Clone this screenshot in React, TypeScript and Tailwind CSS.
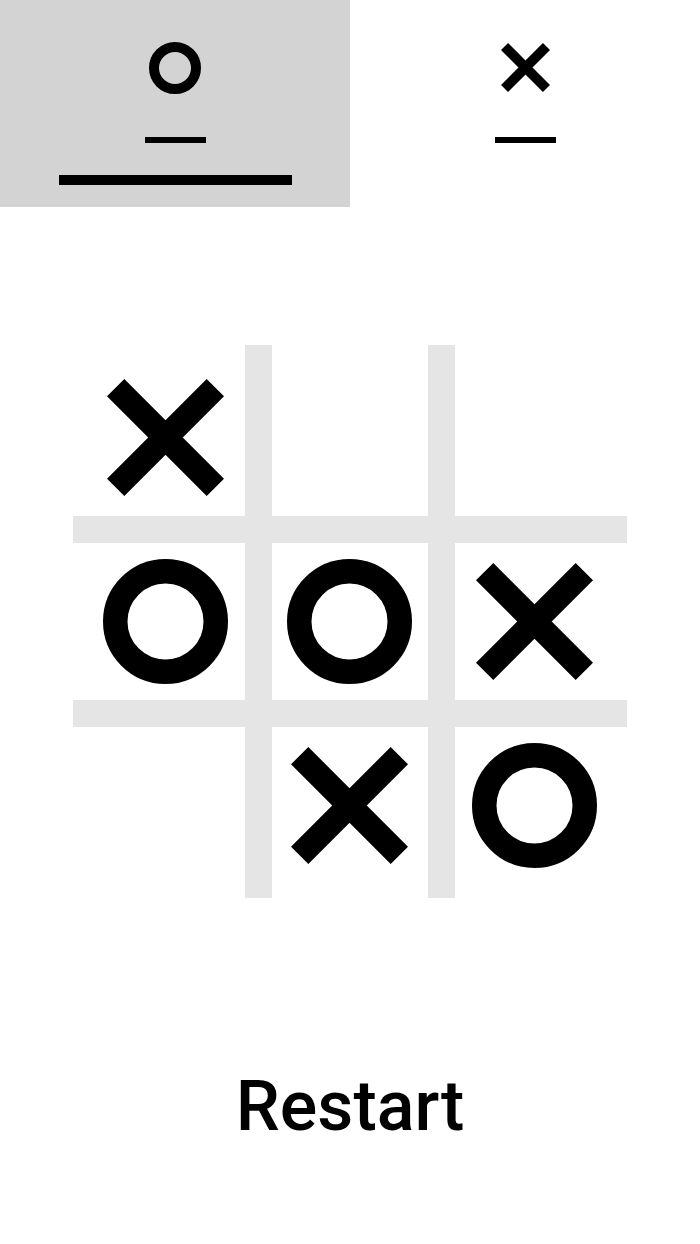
import { useState } from 'react'

type Mark = 'X' | 'O' | null

const START: Mark[] = ['X', null, null, 'O', 'O', 'X', null, 'X', 'O']

// borders draw the grid lines; the matching padding keeps each mark centred in its full third
const CELL_CLASSES = [
  'border-r-[13px] border-b-[13px] pl-[13px] pt-[13px]',
  'border-x-[14px] border-b-[13px] pt-[13px]',
  'border-l-[13px] border-b-[13px] pr-[13px] pt-[13px]',
  'border-r-[13px] border-y-[14px] pl-[13px]',
  'border-x-[14px] border-y-[14px]',
  'border-l-[13px] border-y-[14px] pr-[13px]',
  'border-r-[13px] border-t-[13px] pl-[13px] pb-[13px]',
  'border-x-[14px] border-t-[13px] pb-[13px]',
  'border-l-[13px] border-t-[13px] pr-[13px] pb-[13px]',
]

function Cross({ size, stroke }: { size: number; stroke: number }) {
  const a = stroke / (2 * Math.SQRT2)
  return (
    <svg width={size} height={size} viewBox={`0 0 ${size} ${size}`} className="block">
      <path
        d={`M${a} ${a}L${size - a} ${size - a}M${size - a} ${a}L${a} ${size - a}`}
        stroke="#000"
        strokeWidth={stroke}
        fill="none"
      />
    </svg>
  )
}

function Nought({ size, stroke }: { size: number; stroke: number }) {
  return (
    <svg width={size} height={size} viewBox={`0 0 ${size} ${size}`} className="block">
      <circle cx={size / 2} cy={size / 2} r={(size - stroke) / 2} stroke="#000" strokeWidth={stroke} fill="none" />
    </svg>
  )
}

function PlayerTab({ player, active }: { player: 'X' | 'O'; active: boolean }) {
  return (
    <div className={`flex h-[207px] w-1/2 flex-col items-center ${active ? 'bg-[#d3d3d3]' : 'bg-white'}`}>
      {player === 'O' ? (
        <div className="mt-[42px]">
          <Nought size={52} stroke={10} />
        </div>
      ) : (
        <div className="mt-[43px]">
          <Cross size={49} stroke={10} />
        </div>
      )}
      <div className={`h-[6px] w-[61px] bg-black ${player === 'O' ? 'mt-[43px]' : 'mt-[45px]'}`} />
      {active && <div className="mt-[32px] h-[10px] w-[233px] bg-black" />}
    </div>
  )
}

export default function App() {
  const [board, setBoard] = useState<Mark[]>(START)
  const [turn, setTurn] = useState<'X' | 'O'>('O')

  function play(i: number) {
    if (board[i]) return
    const next = [...board]
    next[i] = turn
    setBoard(next)
    setTurn(turn === 'X' ? 'O' : 'X')
  }

  function restart() {
    setBoard(Array(9).fill(null))
    setTurn('X')
  }

  return (
    <div className="min-h-[1244px] w-full bg-white font-['Roboto',sans-serif]">
      <div className="flex">
        <PlayerTab player="O" active={turn === 'O'} />
        <PlayerTab player="X" active={turn === 'X'} />
      </div>

      <div className="mx-auto mt-[138px] grid h-[553px] w-[554px] grid-cols-3 grid-rows-3">
        {board.map((m, i) => (
          <button
            key={i}
            onClick={() => play(i)}
            className={`flex items-center justify-center border-[#e5e5e5] ${CELL_CLASSES[i]}`}
          >
            {m === 'X' && <Cross size={117} stroke={24.5} />}
            {m === 'O' && <Nought size={125} stroke={24.5} />}
          </button>
        ))}
      </div>

      <div className="mt-[173px] flex justify-center">
        <button onClick={restart} className="text-[70px] font-medium leading-none text-black">
          Restart
        </button>
      </div>
    </div>
  )
}
